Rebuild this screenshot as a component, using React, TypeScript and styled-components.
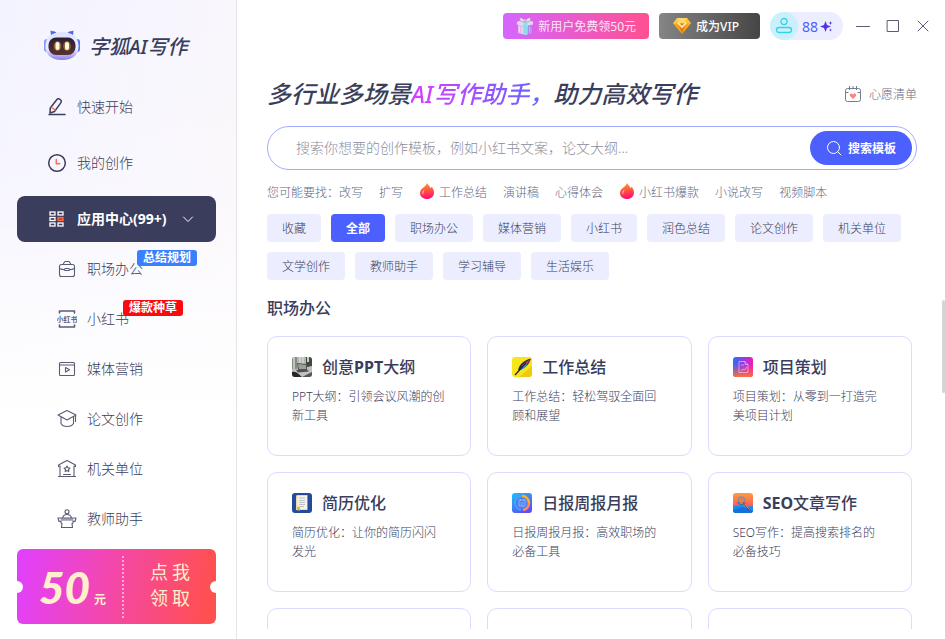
import React from 'react';
import styled, { createGlobalStyle, css } from 'styled-components';

const ink = '#3a3d5c';
const primary = '#4c5fff';

const GlobalStyle = createGlobalStyle`
  *, *::before, *::after { box-sizing: border-box; }
  body {
    margin: 0;
    background: #fff;
    color: ${ink};
    font-family: "Noto Sans", "Noto Sans CJK SC", sans-serif;
    font-size: 12px;
    font-weight: 300;
  }
  button, input { font: inherit; color: inherit; }
  button { border: 0; padding: 0; background: none; cursor: pointer; white-space: nowrap; }
  a { color: inherit; text-decoration: none; }
  h1, h2, h3, p, ul { margin: 0; padding: 0; }
  ul { list-style: none; }
  svg { display: block; flex: none; }
`;

const Page = styled.div`
  display: flex;
  height: 100vh;
  overflow: hidden;
`;

const Sidebar = styled.aside`
  display: flex;
  flex-direction: column;
  flex: none;
  width: 237px;
  padding: 26px 20px 15px 17px;
  border-right: 1px solid #e4e4e8;
  background:
    linear-gradient(180deg, rgba(255, 255, 255, 0) 0, rgba(255, 255, 255, 0.3) 35%, #fff 65%),
    linear-gradient(100deg, #f3f3ff 0, #f8f6fd 55%, #fcf7f9 100%);
`;

const Brand = styled.div`
  display: flex;
  align-items: center;
  gap: 8px;
  height: 38px;
  padding-left: 26px;
  margin-bottom: 20px;
  font-size: 20px;
  font-weight: 500;
  font-style: italic;
  white-space: nowrap;
`;

const Nav = styled.nav`
  display: flex;
  flex-direction: column;
  flex: 1;
  gap: 10px;
  min-height: 0;
`;

const NavItem = styled.button<{ $active?: boolean }>`
  display: flex;
  align-items: center;
  gap: 10px;
  flex: none;
  height: 46px;
  padding-left: 30px;
  border-radius: 8px;
  font-size: 14px;
  line-height: 18px;
  ${(p) => p.$active && css`
    background: ${ink};
    color: #fff;
    font-weight: 700;
    svg:last-child { margin-left: 4px; }
  `}
`;

const SubList = styled.ul`
  margin-top: -8px;
`;

const SubItem = styled.a`
  display: flex;
  align-items: center;
  gap: 10px;
  height: 50px;
  padding-left: 40px;
  font-size: 14px;
  line-height: 18px;
`;

const SubLabel = styled.span`
  position: relative;
`;

const Badge = styled.span<{ $color: string }>`
  position: absolute;
  left: calc(100% - 6px);
  bottom: 12px;
  padding: 0 6px;
  border-radius: 3px;
  background: ${(p) => p.$color};
  color: #fff;
  font-size: 12px;
  line-height: 16px;
  font-weight: 700;
  white-space: nowrap;
`;

const Coupon = styled.button`
  position: relative;
  display: flex;
  align-items: center;
  flex: none;
  height: 75px;
  border-radius: 6px;
  background: linear-gradient(100deg, #e040ff 0, #f347ae 45%, #ff5050 95%);
  color: #fff0cb;
  &::before, &::after {
    content: "";
    position: absolute;
    top: 32px;
    width: 12px;
    height: 12px;
    border-radius: 50%;
    background: #fff;
  }
  &::before { left: -6px; }
  &::after { right: -6px; }
`;

const CouponAmount = styled.span`
  display: flex;
  align-items: baseline;
  justify-content: center;
  gap: 4px;
  width: 105px;
  padding: 14px 0 0 6px;
  font-family: Lato, "Noto Sans CJK SC", sans-serif;
  font-size: 44px;
  line-height: 62px;
  font-weight: 900;
  font-style: italic;
  small { font-size: 12px; font-style: normal; font-weight: 700; }
`;

const CouponAction = styled.span`
  flex: 1;
  display: grid;
  grid-template-columns: 20px 20px;
  justify-content: center;
  column-gap: 2px;
  height: 62px;
  padding-bottom: 4px;
  align-content: center;
  border-left: 2px dotted #fbb0cf;
  font-size: 18px;
  line-height: 26px;
  font-weight: 400;
`;

const Main = styled.main`
  display: flex;
  flex-direction: column;
  flex: 1;
  min-width: 0;
  padding: 0 28px 10px 30px;
`;

const TopBar = styled.header`
  display: flex;
  align-items: center;
  justify-content: flex-end;
  gap: 10px;
  flex: none;
  height: 52px;
  margin-right: -13px;
`;

const PillButton = styled.button<{ $kind: 'gift' | 'vip' }>`
  display: flex;
  align-items: center;
  gap: 4px;
  height: 26px;
  padding: 0 13px;
  border-radius: 4px;
  color: #fff;
  font-size: 12px;
  ${(p) => p.$kind === 'gift'
    ? css`background: linear-gradient(90deg, #d566ff, #ff5091); color: #ffe3f8; font-weight: 400;`
    : css`background: linear-gradient(90deg, #858585, #454545); padding-right: 21px; font-weight: 500;`}
`;

const Account = styled.button`
  display: flex;
  align-items: center;
  gap: 4px;
  height: 28px;
  padding-right: 10px;
  border-radius: 14px;
  background: #eceeff;
  color: ${primary};
  font-size: 14px;
  font-weight: 400;
`;

const Avatar = styled.span`
  display: grid;
  place-items: center;
  width: 28px;
  height: 28px;
  border-radius: 50%;
  background: #c9f0fb;
`;

const Credits = styled.span`
  display: flex;
  align-items: center;
  gap: 2px;
`;

const WindowControls = styled.div`
  display: flex;
  gap: 16px;
  margin-left: 3px;
`;

const Headline = styled.div`
  display: flex;
  align-items: center;
  justify-content: space-between;
  flex: none;
  height: 32px;
  margin: 26px 0 16px;
  h1 {
    font-size: 24px;
    line-height: 32px;
    font-weight: 500;
    font-style: italic;
    white-space: nowrap;
  }
  em {
    background: linear-gradient(90deg, #dc3cff, #9a52ff 50%, #5a6aff);
    background-clip: text;
    -webkit-background-clip: text;
    color: transparent;
  }
`;

const WishLink = styled.a`
  display: flex;
  align-items: center;
  gap: 8px;
  color: #66687f;
  white-space: nowrap;
`;

const SearchBox = styled.form`
  display: flex;
  align-items: center;
  flex: none;
  height: 44px;
  padding: 0 4px 0 28px;
  border: 1px solid #a3abff;
  border-radius: 22px;
  input {
    flex: 1;
    min-width: 0;
    padding: 0 0 2px;
    border: 0;
    outline: 0;
    background: none;
    font-size: 14px;
  }
  input::placeholder { color: #8d8e9d; opacity: 1; }
`;

const SearchButton = styled.button`
  display: flex;
  align-items: center;
  gap: 6px;
  height: 34px;
  padding: 0 16px;
  border-radius: 17px;
  background: ${primary};
  color: #fff;
  font-size: 12px;
  font-weight: 700;
`;

const Hints = styled.div`
  display: flex;
  align-items: center;
  gap: 16px;
  flex: none;
  height: 44px;
  color: #66687f;
  white-space: nowrap;
  a { display: flex; align-items: center; gap: 4px; }
  span + a { margin-left: -16px; }
`;

const Tags = styled.div`
  display: flex;
  flex-wrap: wrap;
  flex: none;
  gap: 10px;
`;

const Tag = styled.button<{ $active?: boolean }>`
  height: 28px;
  padding: 0 15px;
  border-radius: 4px;
  background: ${(p) => (p.$active ? primary : '#eceeff')};
  color: ${(p) => (p.$active ? '#fff' : ink)};
  font-weight: ${(p) => (p.$active ? 700 : 300)};
`;

const Results = styled.section`
  flex: 1;
  min-height: 0;
  overflow: hidden;
  padding-right: 5px;
  margin-top: 16px;
  h2 { font-size: 16px; line-height: 24px; font-weight: 500; margin-bottom: 16px; }
`;

const CardGrid = styled.div`
  display: grid;
  grid-template-columns: repeat(3, 1fr);
  grid-auto-rows: 120px;
  gap: 16px;
`;

const Card = styled.article`
  padding: 18px 25px 18px 24px;
  border: 1px solid #d9dcff;
  border-radius: 10px;
  p { margin-top: 8px; line-height: 19px; }
`;

const CardTitle = styled.div`
  display: flex;
  align-items: center;
  gap: 10px;
  height: 24px;
  h3 { font-size: 16px; line-height: 24px; font-weight: 500; white-space: nowrap; }
  b { font-weight: 700; }
`;

const ScrollTrack = styled.div`
  flex: none;
  width: 3px;
  margin-left: -3px;
  padding-top: 300px;
  &::before {
    content: "";
    display: block;
    height: 93px;
    border-radius: 2px;
    background: #d5d5d9;
  }
`;

const Line = ({ size = 18, w = 1.1, color = '#5a5c76', children }: {
  size?: number; w?: number; color?: string; children: React.ReactNode;
}) => (
  <svg width={size} height={size} viewBox={`0 0 ${size} ${size}`} fill="none" stroke={color}
    strokeWidth={w} strokeLinecap="round" strokeLinejoin="round" aria-hidden="true">{children}</svg>
);

const FoxLogo = () => (
  <svg width="38" height="34" viewBox="0 0 38 34" aria-hidden="true">
    <defs>
      <linearGradient id="foxHead" x1="0" y1="0" x2="0" y2="1">
        <stop offset="0" stopColor="#dfe2ff" /><stop offset=".6" stopColor="#eeeeff" /><stop offset="1" stopColor="#8a7df0" />
      </linearGradient>
      <linearGradient id="foxFace" x1="0" y1="0" x2="0" y2="1">
        <stop offset="0" stopColor="#2b1d33" /><stop offset="1" stopColor="#553331" />
      </linearGradient>
    </defs>
    <path d="M8 8 7.500 2.500Q9 3.500 10.500 3.300T14 5.500L18 7ZM30 8l.5-5.500Q29 3.500 27.500 3.300T24 5.500L20 7Z" fill="#4d65ed" />
    <rect x="1" y="11" width="6" height="13" rx="3" fill="#7f9bff" />
    <rect x="31" y="11" width="6" height="13" rx="3" fill="#5576f5" />
    <path d="M19 4C29 4 35 9 35.500 17S32 32 19 32 2 25 2.500 17 9 4 19 4Z" fill="url(#foxHead)" />
    <rect x="5.500" y="9.500" width="27" height="17.500" rx="7.500" fill="url(#foxFace)" />
    <ellipse cx="14.500" cy="18" rx="3.800" ry="5" fill="#e69a30" opacity=".5" />
    <ellipse cx="24" cy="18" rx="3.800" ry="5" fill="#e69a30" opacity=".5" />
    <rect x="12.500" y="14" width="4" height="8" rx="2" fill="#fff9df" />
    <rect x="22" y="14" width="4" height="8" rx="2" fill="#fff9df" />
  </svg>
);

const PenIcon = () => (
  <Line size={20} w={1.5} color={ink}>
    <path d="M2 17.500h16" />
    <path d="m3 16 .3-5 6.200-8c1-1.300 2.600-1.300 3.700-.5s1.300 2.300.4 3.600L7.500 14.500Z" />
    <path d="m4.500 10.500 3.500 2.500" stroke="#ff6a4a" />
  </Line>
);

const ClockIcon = () => (
  <Line size={20} w={1.500} color={ink}>
    <circle cx="10" cy="10" r="8.300" /><path d="M9.300 6.500v4.300h3.500" stroke="#ff6a4a" />
  </Line>
);

const AppsIcon = () => (
  <svg width="20" height="20" viewBox="0 0 20 20" fill="none" stroke="#fff" strokeWidth="1.300" aria-hidden="true">
    <rect x="3" y="3" width="5" height="3" /><rect x="11" y="3" width="5" height="3" />
    <rect x="3" y="8.500" width="5" height="3" /><rect x="11" y="8.500" width="5" height="3" fill="#b8472f" stroke="#ff6a4a" />
    <rect x="3" y="14" width="5" height="3" /><rect x="11" y="14" width="5" height="3" />
  </svg>
);

const subIcons: Record<string, React.ReactNode> = {
  work: <Line size={20}><rect x="2.500" y="5.500" width="15" height="12" rx="2" /><path d="M6.500 5.500V4.500l1.500-2h4l1.500 2v1M2.500 9.500c2 1 3 1.200 5 1.200m5 0c2 0 3-.2 5-1.200" /><rect x="7.500" y="9.500" width="5" height="2" rx="1" /></Line>,
  red: (
    <Line size={20} w={1.6}>
      <path d="M2.500 4V2h15v2M2.500 16v2h15v-2" />
      <text x="10" y="12.500" textAnchor="middle" fontSize="7" fontWeight="700" fill="#5a5c76" stroke="none">小红书</text>
    </Line>
  ),
  media: <Line size={20}><rect x="2.500" y="3.500" width="15" height="13" rx="1" /><path d="M2.500 6h15M8.500 8.500v4.500l4-2.200Z" /></Line>,
  paper: <Line size={20}><path d="m10 1.500 9 4.500-9 5-9-5ZM4 8v6.500c2 4 10 4 12.500 0V8M18.500 6.500v6" /></Line>,
  office: <Line size={20}><path d="M1.500 17.500h17M3 17.500V7L1.500 7.500V6L10 1.500 18.500 6v1.500L17 7v10.500M6.500 15.500h7M10 7l.9 1.800 2 .3-1.400 1.500.3 2-1.800-1-1.800 1 .3-2-1.400-1.500 2-.3Z" /></Line>,
  teacher: <Line size={20}><circle cx="10" cy="2.800" r="2" /><path d="M5.500 9C6 6.500 8 5.500 10 5.500s4 1 4.500 3.500M1 9h18l-1 3.500-2-.5v2l-1 .5.5 4h-11l.5-4-1-.5v-2l-2 .5Z" /><path d="M5 10.500h10" strokeWidth="2.600" opacity=".6" /></Line>,
};

const Flame = () => (
  <svg width="16" height="18" viewBox="0 0 16 18" aria-hidden="true">
    <defs><linearGradient id="flame" x1=".3" y1="0" x2=".4" y2="1"><stop offset="0" stopColor="#ff9a1c" /><stop offset=".5" stopColor="#ff5145" /><stop offset="1" stopColor="#ff0b75" /></linearGradient></defs>
    <path d="M8 0c.8 2 3 3 3.400 5.200.7-.3 1-1 1.100-1.700 1.700 2 2.500 4 2.500 6 0 4-3 6.500-7 6.500s-7-2.500-7-6c0-3 2-4.500 3.700-5.700C6.500 3 7.500 1.800 8 0Z" fill="url(#flame)" />
    <path d="M3.200 10c.2-1.800 1-2.500 2.500-3.600-.6 1.800-1.600 3.700-1.500 5.300Z" fill="#ffb491" />
  </svg>
);

const GiftIcon = () => (
  <svg width="18" height="20" viewBox="0 0 19 20" aria-hidden="true">
    <path d="M2 7.500h15l-.8 10L10 19.500l-7.500-2Z" fill="#c4c9f2" />
    <path d="M2 7.500h3.500L6 18.500 2.500 17.500Z" fill="#f0b5e8" /><path d="M12.500 8H17l-.8 9.500-4 1.300Z" fill="#a68bef" />
    <path d="M1 5.500 9.500 3 18 5.500v3l-8 1.500L1 8.500Z" fill="#dadcf7" />
    <path d="M8 6h4v13.300L8 19Z" fill="#8fdbea" />
    <path d="M9.500 5.500C7 0 3.500.5 4 3.500c.2 1.500 3 2.500 5.500 2ZM10 5.500c2-5.500 6-5 5.500-2-.3 1.700-3 2.500-5.500 2Z" fill="#f3ddeb" stroke="#aa83cd" strokeWidth=".7" />
    <path d="M3.500 10.500v6M6.500 11v7M14.500 11v6" stroke="#fff" strokeWidth=".7" opacity=".7" />
  </svg>
);

const GemIcon = () => (
  <svg width="20" height="18" viewBox="0 0 20 18" aria-hidden="true">
    <path d="M5 1h10l4 5.500L10 17 1 6.500Z" fill="#f9a51b" /><path d="M5 1h10l-1 5.500H6Z" fill="#ffd76a" />
    <path d="M1 6.500 5 1l1 5.500Z" fill="#ffc744" /><path d="M19 6.500 15 1l-1 5.500Z" fill="#ffbd36" />
    <path d="M6 6.500h8L10 17Z" fill="#e67e0a" /><path d="m6 6 4 4L14 6" fill="none" stroke="#fff2ba" strokeWidth="1.600" />
  </svg>
);

const PptArt = () => (
  <>
    <rect width="20" height="20" fill="#b6b8b0" /><path d="M0 0h5v12H0Z" fill="#858c83" /><path d="M2 0v12M8 0v8M11 0v8" stroke="#d5d7cf" strokeWidth="1.500" />
    <path d="M14 0h6v11h-6Z" fill="#42493f" /><path d="M15 0h2v5h-2Z" fill="#cad2c4" />
    <path d="M0 13 20 9v11H0Z" fill="#c3c0bd" /><path d="m5 6 10 1v6H6Z" fill="#525955" /><path d="m6 7 8 1v4H7Z" fill="#99a19c" />
    <path d="m4 13 11-.500 2 2-11 1Z" fill="#4c5051" /><path d="M0 15c5-1 7 3 10 5H0Z" fill="#242629" /><path d="m10 20 10-5v5Z" fill="#555459" />
  </>
);

const QuillArt = () => (
  <>
    <rect width="20" height="20" fill="#f7e61c" /><path d="M7 20 20 9v11Z" fill="#f2c80d" />
    <path d="M19 1.500C11 3.500 7 8 6 13.500c6-1 11-5.500 13-12Z" fill="#30224e" />
    <path d="M16 5c-3 2-6 5-8 8 4-1 7-4 8-8Z" fill="#27a5db" /><path d="M18 2.500c-4 2-7 4-9 7 4-1 8-3.500 9-7Z" fill="#c83646" />
    <path d="M14 6 3 18" stroke="#27204f" strokeWidth="1.200" />
  </>
);

const PlanArt = () => (
  <>
    <defs>
      <linearGradient id="plan" x1="0" y1="0" x2="1" y2=".15"><stop stopColor="#1f78f5" /><stop offset=".5" stopColor="#8a3fe8" /><stop offset="1" stopColor="#f319b8" /></linearGradient>
      <linearGradient id="planWarm" x1="0" y1="0" x2="0" y2="1"><stop offset=".35" stopColor="#ff5a45" stopOpacity="0" /><stop offset="1" stopColor="#ff7038" /></linearGradient>
    </defs>
    <rect width="20" height="20" fill="url(#plan)" /><rect width="20" height="20" fill="url(#planWarm)" />
    <path d="M6 4.500h6l3 3v8H6Zm6 0v3h3M8 8h3M8 14l2-2 1.500 1 2.500-3" fill="none" stroke="#e8cfff" strokeWidth=".8" opacity=".8" />
  </>
);

const ResumeArt = () => (
  <>
    <rect width="20" height="20" fill="#244b9b" /><path d="M4 3.500C4 2 5 2 6 2h9.500v15H4Z" fill="#ead9b8" /><path d="M5.500 3H15v13H5.500Z" fill="#f7f3e5" />
    <path d="M7 5h6M7 7.500h6M7 9.500h6M7 11.500h6M8 13.500h4" stroke="#a3abb9" strokeWidth=".7" /><circle cx="6.500" cy="15" r="1.700" fill="#efb63e" /><path d="m5.500 16-.5 2 1.500-.7L8 18l-.5-2Z" fill="#e9a636" />
  </>
);

const ReportArt = () => (
  <>
    <defs><linearGradient id="report" x1="0" y1="0" x2=".6" y2="1"><stop stopColor="#18c5fa" /><stop offset="1" stopColor="#5d4df5" /></linearGradient></defs>
    <rect width="20" height="20" fill="url(#report)" /><circle cx="10" cy="10" r="6.500" fill="#4b7df2" />
    <path d="M10 3a7 7 0 0 0-6.500 9.500A7 7 0 0 0 9 17" fill="none" stroke="#42a4fa" strokeWidth="1.800" />
    <path d="M10 3a7 7 0 0 1 7 7" fill="none" stroke="#ffae1e" strokeWidth="2.600" /><path d="M17 10a7 7 0 0 1-6 7" fill="none" stroke="#ff8768" strokeWidth="2.600" />
    <path d="M7 7h6v6H7ZM8.500 6v2M11.500 6v2M8.500 10h3M8.500 12h3" fill="none" stroke="#9ac0ff" strokeWidth=".8" />
  </>
);

const SeoArt = () => (
  <>
    <defs><linearGradient id="seo" x1="0" y1="0" x2="0" y2="1"><stop stopColor="#ff9c3c" /><stop offset=".65" stopColor="#ff5b57" /></linearGradient></defs>
    <rect width="20" height="20" fill="url(#seo)" /><path d="M0 13c6-1 14 1 20 0v7H0Z" fill="#188cf3" /><path d="m0 17 10-3 10 4v2H0Z" fill="#1570d9" />
    <circle cx="8.500" cy="7.500" r="3.500" fill="#e77b4d" stroke="#7b93a8" strokeWidth="1.400" /><path d="M5 9c1 3 4 4 6 2" fill="none" stroke="#3578bc" strokeWidth="1.600" />
    <path d="m11 10 4.500 6" stroke="#8b3a36" strokeWidth="1.800" strokeLinecap="round" /><path d="m11.500 10.500 4 5" stroke="#ffc79c" strokeWidth=".8" />
  </>
);

const CardArt = ({ id, children }: { id: string; children: React.ReactNode }) => (
  <svg width="20" height="20" viewBox="0 0 20 20" aria-hidden="true">
    <clipPath id={id}><rect width="20" height="20" rx="3" /></clipPath>
    <g clipPath={`url(#${id})`}>{children}</g>
  </svg>
);

const subItems = [
  { label: '职场办公', icon: 'work', badge: '总结规划', color: '#3880ff' },
  { label: '小红书', icon: 'red', badge: '爆款种草', color: '#fa0a0f' },
  { label: '媒体营销', icon: 'media' },
  { label: '论文创作', icon: 'paper' },
  { label: '机关单位', icon: 'office' },
  { label: '教师助手', icon: 'teacher' },
];

const hints = [
  { label: '改写' }, { label: '扩写' }, { label: '工作总结', hot: true }, { label: '演讲稿' },
  { label: '心得体会' }, { label: '小红书爆款', hot: true }, { label: '小说改写' }, { label: '视频脚本' },
];

const tags = ['收藏', '全部', '职场办公', '媒体营销', '小红书', '润色总结', '论文创作', '机关单位',
  '文学创作', '教师助手', '学习辅导', '生活娱乐'];

const cards = [
  { id: 'art-ppt', title: <>创意<b>PPT</b>大纲</>, text: 'PPT大纲：引领会议风潮的创新工具', art: <PptArt /> },
  { id: 'art-sum', title: '工作总结', text: '工作总结：轻松驾驭全面回顾和展望', art: <QuillArt /> },
  { id: 'art-plan', title: '项目策划', text: '项目策划：从零到一打造完美项目计划', art: <PlanArt /> },
  { id: 'art-cv', title: '简历优化', text: '简历优化：让你的简历闪闪发光', art: <ResumeArt /> },
  { id: 'art-report', title: '日报周报月报', text: '日报周报月报：高效职场的必备工具', art: <ReportArt /> },
  { id: 'art-seo', title: <><b>SEO</b>文章写作</>, text: 'SEO写作：提高搜索排名的必备技巧', art: <SeoArt /> },
];

export default function App() {
  return (
    <Page lang="zh-CN">
      <GlobalStyle />
      <Sidebar>
        <Brand><FoxLogo />字狐AI写作</Brand>
        <Nav>
          <NavItem><PenIcon />快速开始</NavItem>
          <NavItem><ClockIcon />我的创作</NavItem>
          <NavItem $active aria-expanded="true">
            <AppsIcon />应用中心(99+)
            <Line size={14} w={1} color="#fff"><path d="m2.500 5 4.500 4.500L11.500 5" /></Line>
          </NavItem>
          <SubList>
            {subItems.map((s) => (
              <li key={s.label}>
                <SubItem href="#">
                  {subIcons[s.icon]}
                  <SubLabel>{s.label}{s.badge && <Badge $color={s.color!}>{s.badge}</Badge>}</SubLabel>
                </SubItem>
              </li>
            ))}
          </SubList>
        </Nav>
        <Coupon>
          <CouponAmount>50<small>元</small></CouponAmount>
          <CouponAction><span>点</span><span>我</span><span>领</span><span>取</span></CouponAction>
        </Coupon>
      </Sidebar>

      <Main>
        <TopBar>
          <PillButton $kind="gift"><GiftIcon />新用户免费领50元</PillButton>
          <PillButton $kind="vip"><GemIcon />成为VIP</PillButton>
          <Account aria-label="账户">
            <Avatar><Line size={18} w={1.3} color="#35d3e6"><circle cx="9" cy="4.500" r="3" /><rect x="1.500" y="10.500" width="15" height="5" rx="2.500" /></Line></Avatar>
            <Credits>
              88
              <svg width="13" height="13" viewBox="0 0 13 13" fill="#5333ea" aria-hidden="true">
                <path d="M5.500 1 7 5l4 1.500L7 8l-1.500 4L4 8 0 6.500 4 5ZM10.500 1l.5 1.500 1.500.5-1.500.5-.5 1.500-.5-1.500L8.500 3l1.500-.5ZM10.500 8.500l.4 1.100 1.100.4-1.100.4-.4 1.100-.4-1.100L9 10l1.100-.4Z" />
              </svg>
            </Credits>
          </Account>
          <WindowControls>
            <button aria-label="最小化"><Line size={14} w={1}><path d="M.5 7.500h13" /></Line></button>
            <button aria-label="最大化"><Line size={14} w={1}><rect x="1.500" y="1.500" width="11" height="11" /></Line></button>
            <button aria-label="关闭"><Line size={14} w={1}><path d="m2 2 10 10M12 2 2 12" /></Line></button>
          </WindowControls>
        </TopBar>

        <Headline>
          <h1>多行业多场景<em>AI写作助手，</em>助力高效写作</h1>
          <WishLink href="#">
            <svg width="16" height="18" viewBox="0 0 16 18" fill="none" stroke="#777990" aria-hidden="true">
              <rect x=".500" y="3.500" width="15" height="13" rx="2" /><path d="M.5 7.500h3m9 0h3M4.500 1v4M8 1v3M11.500 1v4" />
              <path d="M8 14 5 11C4 9 6.300 7.600 8 9.500c1.700-1.900 4-.5 3 1.500Z" fill="#ff8282" stroke="none" />
            </svg>
            心愿清单
          </WishLink>
        </Headline>

        <SearchBox onSubmit={(e) => e.preventDefault()}>
          <input type="text" aria-label="搜索模板" placeholder="搜索你想要的创作模板，例如小红书文案，论文大纲..." />
          <SearchButton type="submit">
            <Line size={16} w={1} color="#fff"><circle cx="7.500" cy="7.500" r="6" /><path d="m12 12 3 3" /></Line>
            搜索模板
          </SearchButton>
        </SearchBox>

        <Hints>
          <span>您可能要找：</span>
          {hints.map((h) => <a href="#" key={h.label}>{h.hot && <Flame />}{h.label}</a>)}
        </Hints>

        <Tags>
          {tags.map((t) => <Tag key={t} $active={t === '全部'}>{t}</Tag>)}
        </Tags>

        <Results>
          <h2>职场办公</h2>
          <CardGrid>
            {cards.map((c) => (
              <Card key={c.id}>
                <CardTitle><CardArt id={c.id}>{c.art}</CardArt><h3>{c.title}</h3></CardTitle>
                <p>{c.text}</p>
              </Card>
            ))}
            <Card /><Card /><Card />
          </CardGrid>
        </Results>
      </Main>
      <ScrollTrack />
    </Page>
  );
}
